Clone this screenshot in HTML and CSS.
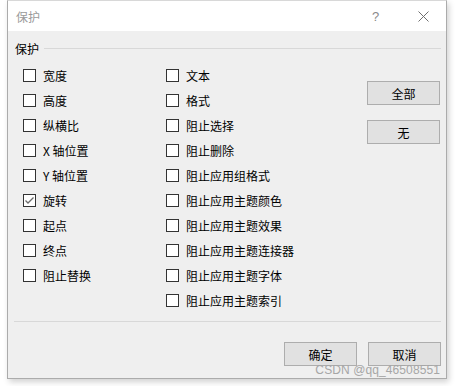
FILE: index.html
```html
<!DOCTYPE html>
<html lang="zh">
<head>
<meta charset="utf-8">
<link rel="stylesheet" href="styles.css">
</head>
<body>
<div class="page">
  <div class="dialog">
    <div class="titlebar">
      <span class="title">保护</span>
      <span class="help">?</span>
      <svg class="close" width="11" height="11" viewBox="0 0 11 11"><path d="M0.5 0.5L10.5 10.5M10.5 0.5L0.5 10.5" stroke="#6f6f6f" stroke-width="1" fill="none"/></svg>
    </div>
    <div class="content">
      <div class="group-head"><span class="group-label">保护</span><span class="group-line"></span></div>
      <div class="main">
        <div class="col col1">
          <label class="row"><span class="box"></span><span>宽度</span></label>
          <label class="row"><span class="box"></span><span>高度</span></label>
          <label class="row"><span class="box"></span><span>纵横比</span></label>
          <label class="row"><span class="box"></span><span>X 轴位置</span></label>
          <label class="row"><span class="box"></span><span>Y 轴位置</span></label>
          <label class="row"><span class="box checked"><svg width="11" height="11" viewBox="0 0 11 11"><path d="M1.5 5.5L4 8L9.5 2.5" stroke="#6a6a6a" stroke-width="1.3" fill="none"/></svg></span><span>旋转</span></label>
          <label class="row"><span class="box"></span><span>起点</span></label>
          <label class="row"><span class="box"></span><span>终点</span></label>
          <label class="row"><span class="box"></span><span>阻止替换</span></label>
        </div>
        <div class="col col2">
          <label class="row"><span class="box"></span><span>文本</span></label>
          <label class="row"><span class="box"></span><span>格式</span></label>
          <label class="row"><span class="box"></span><span>阻止选择</span></label>
          <label class="row"><span class="box"></span><span>阻止删除</span></label>
          <label class="row"><span class="box"></span><span>阻止应用组格式</span></label>
          <label class="row"><span class="box"></span><span>阻止应用主题颜色</span></label>
          <label class="row"><span class="box"></span><span>阻止应用主题效果</span></label>
          <label class="row"><span class="box"></span><span>阻止应用主题连接器</span></label>
          <label class="row"><span class="box"></span><span>阻止应用主题字体</span></label>
          <label class="row"><span class="box"></span><span>阻止应用主题索引</span></label>
        </div>
        <div class="side">
          <button class="btn">全部</button>
          <button class="btn">无</button>
        </div>
      </div>
      <div class="sep"></div>
      <div class="footer">
        <button class="btn">确定</button>
        <button class="btn">取消</button>
      </div>
    </div>
    <div class="watermark">CSDN @qq_46508551</div>
  </div>
</div>
</body>
</html>
```
FILE: styles.css
```css
* { box-sizing: border-box; }
html, body { margin: 0; padding: 0; background: #ffffff; }
body {
  width: 455px; height: 386px; overflow: hidden;
  font-family: "Microsoft YaHei UI", "Noto Sans CJK SC", "Noto Sans", sans-serif;
  font-size: 12px; color: #000;
}
.page { padding-left: 7px; }
.dialog {
  position: relative;
  width: 440px; height: 379px;
  border: 1px solid #ababab;
  border-top-color: #d8d8d8;
  background: #efefef;
  box-shadow: 2px 3px 6px rgba(0,0,0,0.18);
  display: flex; flex-direction: column;
}
.titlebar {
  height: 30px; background: #fff;
  display: flex; align-items: center;
  padding-left: 8px;
}
.title { color: #9a9a9a; font-size: 12px; flex: 1; }
.help { color: #8a8a8a; font-size: 13px; width: 12px; margin-right: 34px; font-family: "Liberation Sans", sans-serif; }
.close { margin-right: 17px; }
.content { padding: 0 5px 0 6px; flex: 1; display: flex; flex-direction: column; }
.group-head { display: flex; align-items: center; height: 17px; margin-top: 9px; }
.group-label { margin-left: 1px; line-height: 17px; }
.group-line { flex: 1; height: 1px; background: #d8d8d8; margin-left: 5px; }
.main { display: flex; margin-top: 6px; }
.col { display: flex; flex-direction: column; }
.col1 { width: 152px; padding-left: 9px; }
.col2 { width: 201px; }
.row { display: flex; align-items: center; height: 25px; gap: 7px; }
.box {
  width: 13px; height: 13px; border: 1px solid #333;
  background: #fff; display: flex; align-items: center; justify-content: center;
}
.box.checked { border-color: #333; }
.side { display: flex; flex-direction: column; gap: 15px; padding-top: 18px; }
.btn {
  width: 73px; height: 24px; border: 1px solid #adadad; background: #e1e1e1;
  font-family: inherit; font-size: 12px; color: #000; padding: 0;
}
.sep { height: 1px; background: #d8d8d8; margin-top: 8px; }
.footer { display: flex; justify-content: flex-end; gap: 11px; margin-top: 20px; padding-right: 0; }
.watermark {
  position: absolute; right: 6px; bottom: 1px;
  font-family: "Liberation Sans", Arial, sans-serif; font-size: 12px;
  color: #a6a6a6; letter-spacing: 0.1px;
}
```
